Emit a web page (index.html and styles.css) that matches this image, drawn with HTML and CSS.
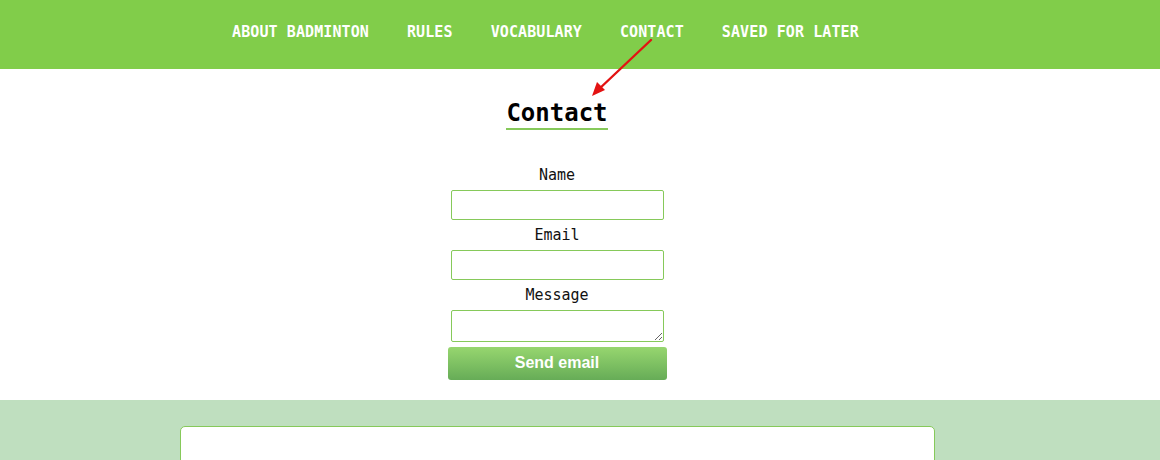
FILE: index.html
```html
<!DOCTYPE html>
<html lang="en">
<head>
<meta charset="utf-8">
<title>Contact</title>
<link rel="stylesheet" href="styles.css">
</head>
<body>
<header class="topbar">
  <nav class="nav">
    <a href="#">ABOUT BADMINTON</a>
    <a href="#">RULES</a>
    <a href="#">VOCABULARY</a>
    <a href="#">CONTACT</a>
    <a href="#">SAVED FOR LATER</a>
  </nav>
</header>
<main class="main">
  <h1 class="title">Contact</h1>
  <form class="form">
    <label class="label" for="name">Name</label>
    <input class="field" id="name" type="text">
    <label class="label" for="email">Email</label>
    <input class="field" id="email" type="email">
    <label class="label" for="msg">Message</label>
    <textarea class="field area" id="msg"></textarea>
    <button class="send" type="button">Send email</button>
  </form>
</main>
<section class="band">
  <div class="card"></div>
</section>
<svg class="arrow" width="80" height="70" viewBox="0 0 80 70">
  <line x1="71" y1="10" x2="18" y2="60" stroke="#e31212" stroke-width="2.4" stroke-linecap="round"/>
  <polygon points="12,66 17,52 25,60" fill="#e31212"/>
</svg>
</body>
</html>
```
FILE: styles.css
```css
* { box-sizing: border-box; }
html, body { margin: 0; padding: 0; }
body {
  background: #fff;
  font-family: "DejaVu Sans Mono", "Liberation Mono", monospace;
  color: #111;
  height: 460px;
  overflow: hidden;
  position: relative;
}
.topbar {
  background: #81cd4a;
  height: 69px;
  display: flex;
  align-items: center;
}
.nav {
  display: flex;
  gap: 38px;
  padding-left: 232px;
  padding-bottom: 6px;
}
.nav a {
  color: #fff;
  text-decoration: none;
  font-family: "DejaVu Sans Mono", monospace;
  font-weight: bold;
  font-size: 15px;
  letter-spacing: 0.1px;
}
.main {
  padding-right: 46px;
  display: flex;
  flex-direction: column;
  align-items: center;
  padding-bottom: 20px;
}
.title {
  margin: 30px 0 0;
  font-family: "DejaVu Sans Mono", monospace;
  font-weight: bold;
  font-size: 24px;
  line-height: 28px;
  color: #000;
  border-bottom: 2px solid #86c95a;
  padding-bottom: 1px;
}
.form {
  margin-top: 30px;
  display: flex;
  flex-direction: column;
  align-items: center;
  width: 220px;
}
.label {
  font-size: 15px;
  line-height: 30px;
  height: 30px;
  color: #111;
}
.field {
  width: 213px;
  height: 30px;
  border: 1px solid #86c95a;
  border-radius: 2px;
  background: #fff;
  margin: 0;
  padding: 2px 4px;
  font: inherit;
}
.area {
  height: 32px;
  resize: vertical;
  margin-bottom: 5px;
}
.send {
  width: 219px;
  height: 33px;
  border: none;
  border-radius: 3px;
  background: linear-gradient(#97d66f, #66ac57);
  color: #fff;
  font-family: "Liberation Sans", Arial, sans-serif;
  font-weight: bold;
  font-size: 16px;
  cursor: pointer;
  padding: 0 0 2px;
}
.band {
  background: #bfdfbf;
  padding: 26px 0 0;
  padding-right: 46px;
  display: flex;
  justify-content: center;
  height: 60px;
  overflow: hidden;
}
.card {
  flex: none;
  width: 755px;
  height: 60px;
  background: #fff;
  border: 1px solid #86c95a;
  border-radius: 5px;
}
.arrow {
  position: absolute;
  left: 580px;
  top: 30px;
}
```
